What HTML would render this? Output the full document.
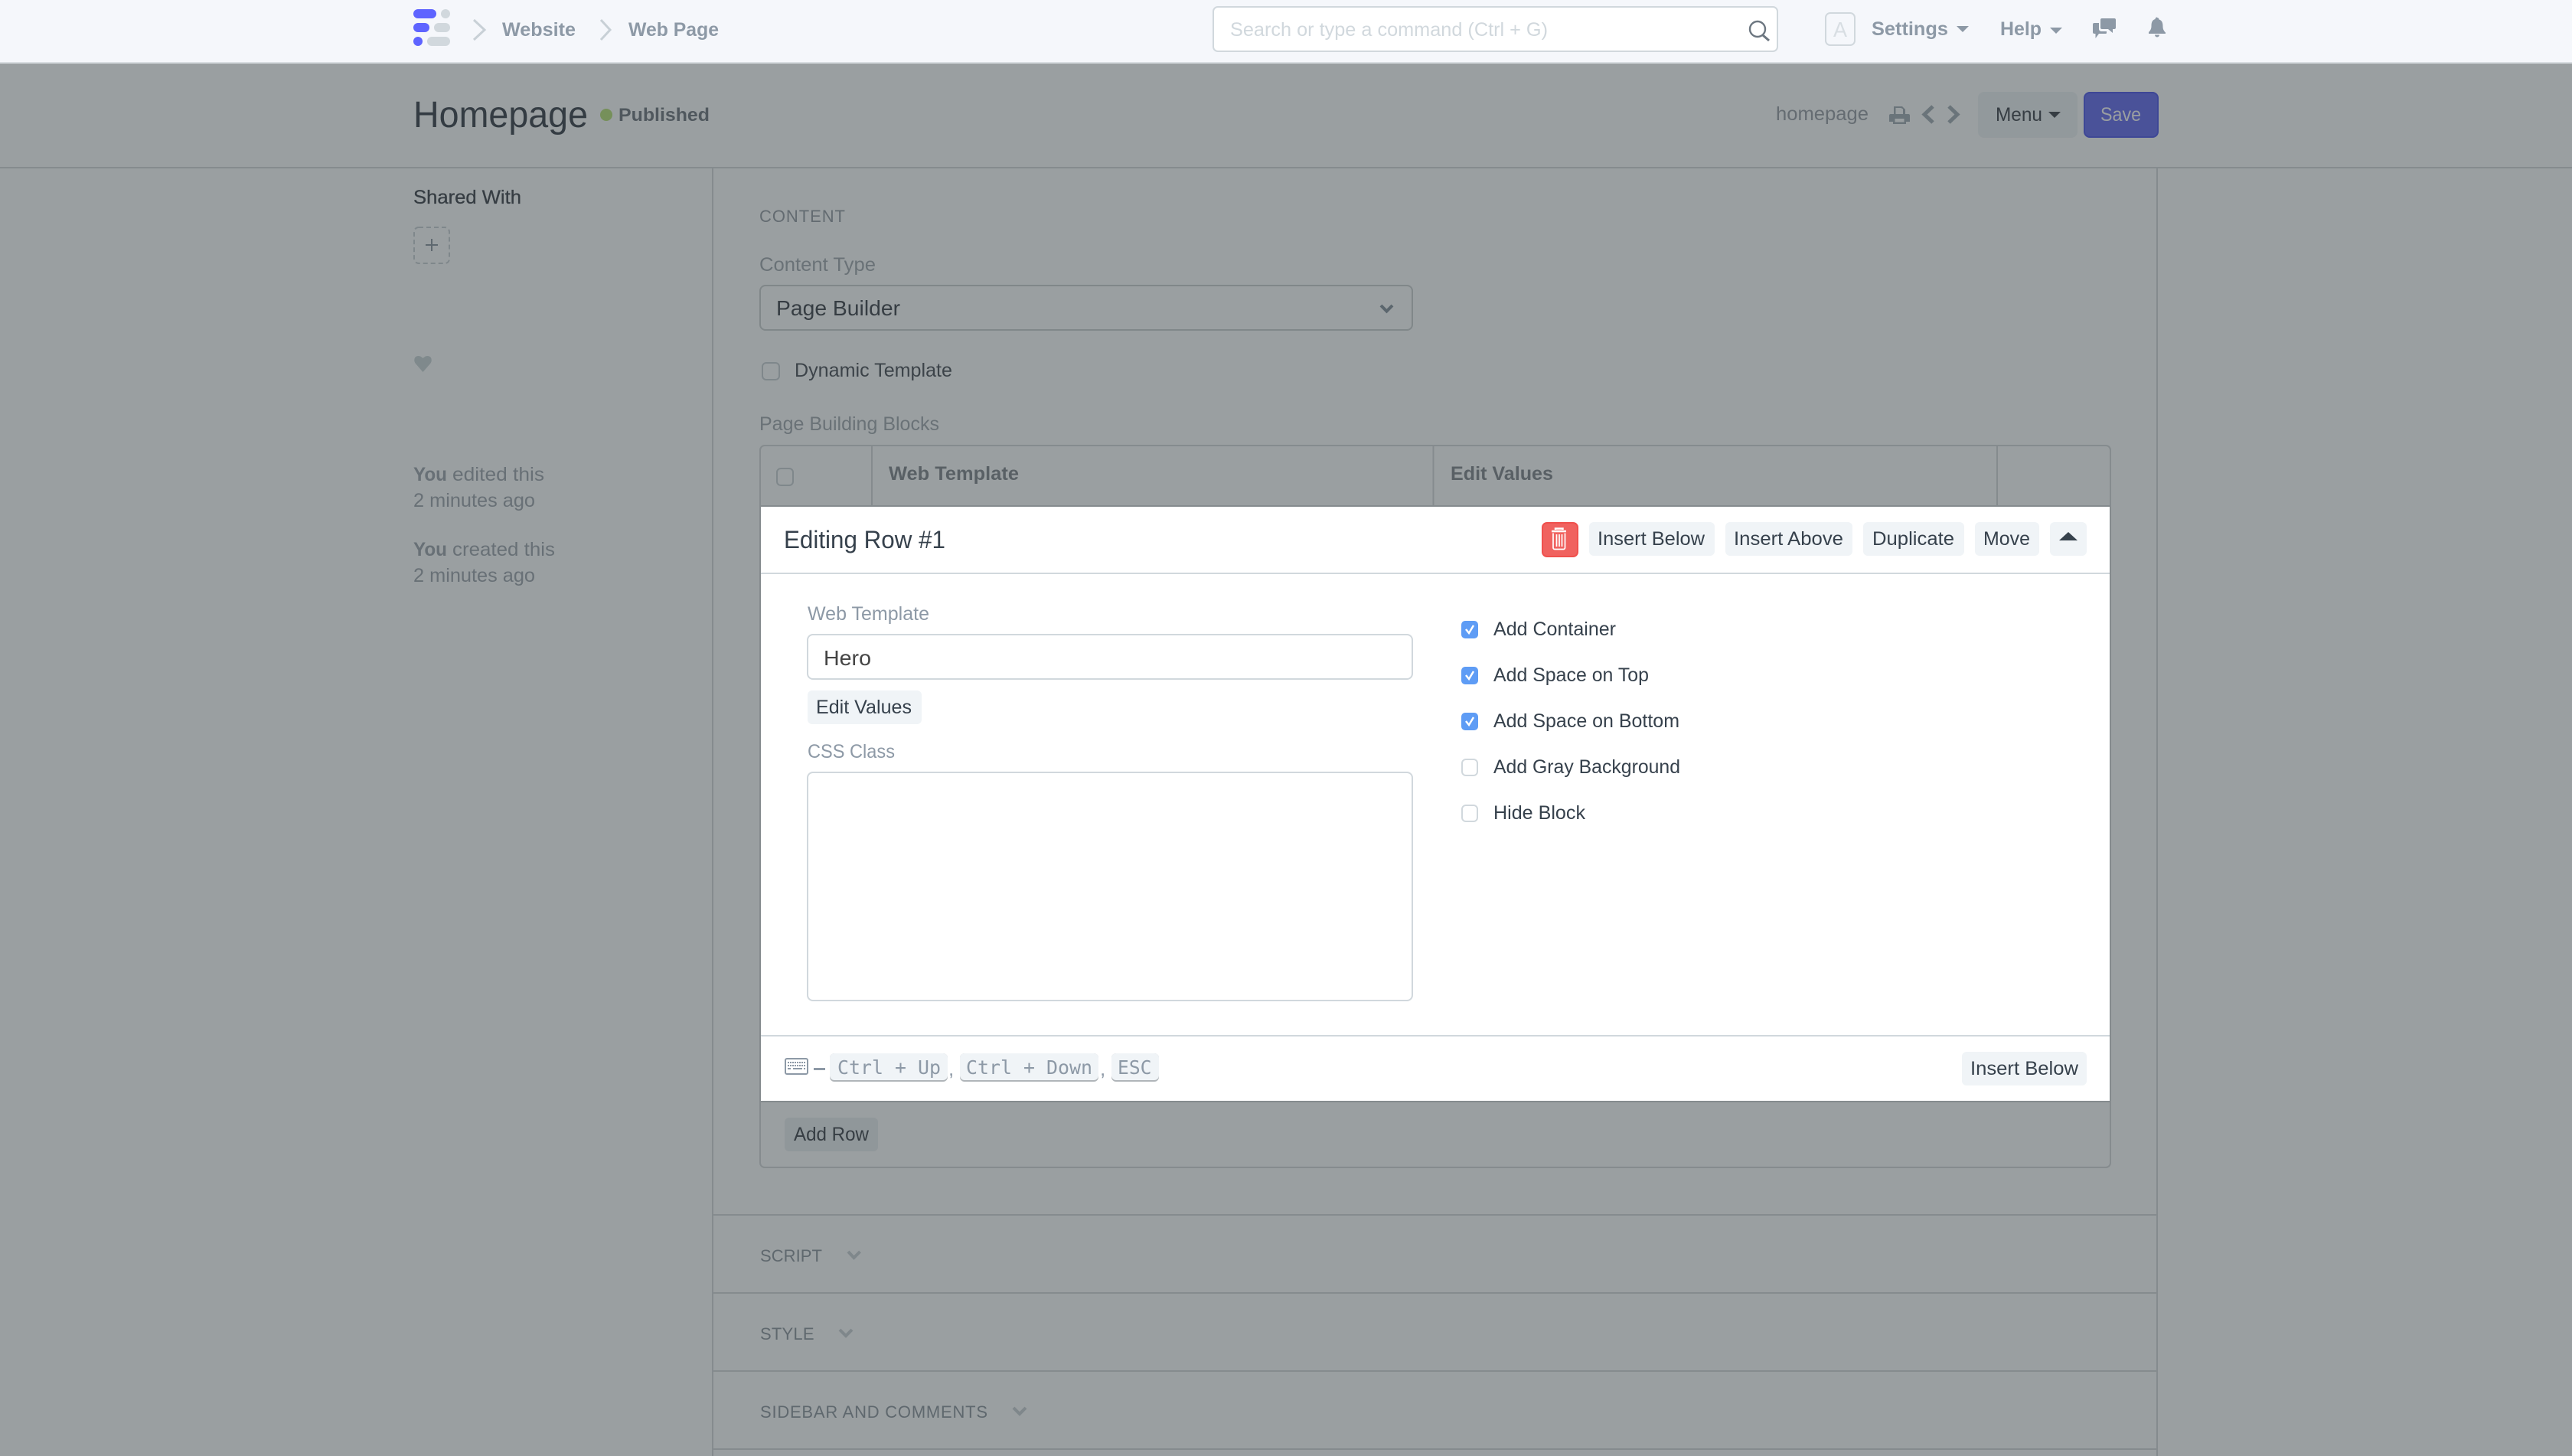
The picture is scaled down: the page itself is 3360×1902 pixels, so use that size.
<!DOCTYPE html>
<html><head><meta charset="utf-8"><title>Homepage</title>
<style>
html,body{margin:0;padding:0;width:3360px;height:1902px;overflow:hidden;background:#9a9fa1}
svg{display:block}
text{font-family:"Liberation Sans",sans-serif;white-space:pre}
.m{font-family:"DejaVu Sans Mono","Liberation Mono",monospace}
.b{font-weight:700}
</style></head><body>
<svg xmlns="http://www.w3.org/2000/svg" width="3360" height="1902" viewBox="0 0 3360 1902">
<rect width="3360" height="1902" fill="#9a9fa1"/>
<!-- navbar -->
<rect width="3360" height="81" fill="#f5f7fb"/>
<rect y="81" width="3360" height="2" fill="#d8dde1"/>
<rect x="540" y="12" width="30" height="12" rx="6" fill="#5e64ff"/><rect x="576" y="12" width="12" height="12" rx="6" fill="#d1d8dd"/>
<rect x="540" y="30" width="21" height="12" rx="6" fill="#5e64ff"/><rect x="567" y="30" width="21" height="12" rx="6" fill="#d1d8dd"/>
<rect x="540" y="48" width="12" height="12" rx="6" fill="#5e64ff"/><rect x="558" y="48" width="30" height="12" rx="6" fill="#d1d8dd"/>
<polyline points="619,26 633,39 619,52" fill="none" stroke="#c8d0d6" stroke-width="3"/>
<text x="656" y="47" font-size="25" class="b" fill="#8d99a6" textLength="96" lengthAdjust="spacingAndGlyphs">Website</text>
<polyline points="785,26 797,39 785,52" fill="none" stroke="#c8d0d6" stroke-width="3"/>
<text x="821" y="47" font-size="25" class="b" fill="#8d99a6" textLength="118" lengthAdjust="spacingAndGlyphs">Web Page</text>
<rect x="1585" y="9" width="737" height="58" rx="6" fill="#fff" stroke="#d1d8dd" stroke-width="2"/>
<text x="1607" y="47" font-size="25" fill="#d1d8dd" textLength="415" lengthAdjust="spacingAndGlyphs">Search or type a command (Ctrl + G)</text>
<circle cx="2296" cy="38" r="10" fill="none" stroke="#6c7680" stroke-width="2.400"/><line x1="2303" y1="46" x2="2311" y2="53" stroke="#6c7680" stroke-width="3"/>
<rect x="2385" y="17" width="38" height="42" rx="6" fill="none" stroke="#d1d8dd" stroke-width="2"/>
<text x="2395" y="48" font-size="28" fill="#d8dee3" textLength="18" lengthAdjust="spacingAndGlyphs">A</text>
<text x="2445" y="46" font-size="25" class="b" fill="#8d99a6" textLength="100" lengthAdjust="spacingAndGlyphs">Settings</text>
<polygon points="2556,34 2572,34 2564,42" fill="#8d99a6"/>
<text x="2613" y="46" font-size="25" class="b" fill="#8d99a6" textLength="54" lengthAdjust="spacingAndGlyphs">Help</text>
<polygon points="2678,36 2694,36 2686,44" fill="#8d99a6"/>
<path d="M2746 24h16a2 2 0 0 1 2 2v10a2 2 0 0 1-2 2h-2v5l-6-5h-8a2 2 0 0 1-2-2V26a2 2 0 0 1 2-2z" fill="#8d99a6"/>
<path d="M2736 30h6v8a3 3 0 0 0 3 3h7v2a1 1 0 0 1-1 1h-9l-4.500 6v-6h-1.500a2 2 0 0 1-2-2V32a2 2 0 0 1 2-2z" fill="#8d99a6"/>
<path d="M2818 23a2.500 2.500 0 0 1 2.500 2.500c4 1 5 4.500 5 9 0 3.500 1 5.500 3.500 8v1.500h-22V42c2.500-2.500 3.500-4.500 3.500-8 0-4.500 1-8 5-9a2.500 2.500 0 0 1 2.500-2.500zM2815 45.500h6a3 3 0 0 1-6 0z" fill="#8d99a6"/>

<!-- page header -->
<rect y="218" width="3360" height="2" fill="#858b8e"/>
<text x="540" y="166" font-size="48" fill="#343c43" textLength="228" lengthAdjust="spacingAndGlyphs">Homepage</text>
<circle cx="792" cy="150" r="8" fill="#76905a"/>
<text x="808" y="158" font-size="24" class="b" fill="#50585e" textLength="119" lengthAdjust="spacingAndGlyphs">Published</text>
<text x="2320" y="157" font-size="25" fill="#656c72" textLength="121" lengthAdjust="spacingAndGlyphs">homepage</text>
<path d="M2474 139h11l4 4v6h-3v-6.500l-2.500-1.500H2476.500v8h-2.500zM2470 149h23a2 2 0 0 1 2 2v8h-5v3h-17v-3h-5v-8a2 2 0 0 1 2-2zM2475.500 155v4.500h12V155z" fill="#6a747a" fill-rule="evenodd"/>
<polyline points="2525,139 2514,149.500 2525,160" fill="none" stroke="#6a747a" stroke-width="5"/>
<polyline points="2546,139 2557,149.500 2546,160" fill="none" stroke="#6a747a" stroke-width="5"/>
<rect x="2584" y="120" width="130" height="60" rx="8" fill="#92999c"/>
<text x="2607" y="158" font-size="25" fill="#363d43" textLength="61" lengthAdjust="spacingAndGlyphs">Menu</text>
<polygon points="2676,146 2692,146 2684,154" fill="#363d43"/>
<rect x="2723" y="121" width="96" height="58" rx="7" fill="#4a5299" stroke="#3e4796" stroke-width="2"/>
<text x="2744" y="158" font-size="25" fill="#9a9ea1" textLength="53" lengthAdjust="spacingAndGlyphs">Save</text>

<!-- frame lines -->
<rect x="930" y="220" width="2" height="1682" fill="#858b8e"/>
<rect x="2817" y="220" width="2" height="1682" fill="#858b8e"/>

<!-- sidebar -->
<text x="540" y="266" font-size="25" fill="#363d43" stroke="#363d43" stroke-width=".3" textLength="141" lengthAdjust="spacingAndGlyphs">Shared With</text>
<rect x="541" y="297" width="46" height="47" rx="6" fill="none" stroke="#7f878b" stroke-width="2" stroke-dasharray="6 4"/>
<path d="M564 312v16M556 320h16" stroke="#5e686f" stroke-width="2"/>
<path d="M552.500 486l-10-11.500a7 7 0 0 1 0-8c3-2.500 7-2 10 1.500 3-3.500 7-4 10-1.500a7 7 0 0 1 0 8z" fill="#7f898c"/>
<text x="540" y="628" font-size="25" class="b" fill="#687076" textLength="44" lengthAdjust="spacingAndGlyphs">You</text>
<text x="591" y="628" font-size="25" fill="#687076" textLength="120" lengthAdjust="spacingAndGlyphs">edited this</text>
<text x="540" y="662" font-size="25" fill="#687076" textLength="159" lengthAdjust="spacingAndGlyphs">2 minutes ago</text>
<text x="540" y="726" font-size="25" class="b" fill="#687076" textLength="44" lengthAdjust="spacingAndGlyphs">You</text>
<text x="591" y="726" font-size="25" fill="#687076" textLength="134" lengthAdjust="spacingAndGlyphs">created this</text>
<text x="540" y="760" font-size="25" fill="#687076" textLength="159" lengthAdjust="spacingAndGlyphs">2 minutes ago</text>

<!-- form -->
<text x="992" y="290" font-size="22" fill="#636b71" textLength="112" lengthAdjust="spacing">CONTENT</text>
<text x="992" y="354" font-size="25" fill="#6a7277" textLength="152" lengthAdjust="spacingAndGlyphs">Content Type</text>
<rect x="993" y="373" width="852" height="58" rx="7" fill="none" stroke="#808789" stroke-width="2"/>
<text x="1014" y="412" font-size="28" fill="#363d43" textLength="162" lengthAdjust="spacingAndGlyphs">Page Builder</text>
<polyline points="1804,399 1811.500,406.500 1819,399" fill="none" stroke="#5b666d" stroke-width="4"/>
<rect x="996" y="474" width="22" height="22" rx="5" fill="none" stroke="#7f878b" stroke-width="2"/>
<text x="1038" y="492" font-size="25" fill="#3c4349" textLength="206" lengthAdjust="spacingAndGlyphs">Dynamic Template</text>
<text x="992" y="562" font-size="25" fill="#6a7277" textLength="235" lengthAdjust="spacingAndGlyphs">Page Building Blocks</text>
<!-- table -->
<rect x="993" y="582" width="1764" height="943" rx="6" fill="none" stroke="#858b8e" stroke-width="2"/>
<path d="M1139 582v80M1872.500 582v80M2609 582v80" stroke="#858b8e" stroke-width="2"/>
<rect x="1015" y="612" width="21" height="22" rx="5" fill="none" stroke="#7f878b" stroke-width="2"/>
<text x="1161" y="627" font-size="25" class="b" fill="#596065" textLength="170" lengthAdjust="spacingAndGlyphs">Web Template</text>
<text x="1895" y="627" font-size="25" class="b" fill="#596065" textLength="134" lengthAdjust="spacingAndGlyphs">Edit Values</text>
<rect x="992" y="660" width="1766" height="2" fill="#858b8e"/>
<rect x="992" y="1438" width="1766" height="2" fill="#858b8e"/>
<rect x="1025" y="1460" width="122" height="44" rx="6" fill="#90979a"/>
<text x="1037" y="1490" font-size="25" fill="#363d43" textLength="98" lengthAdjust="spacingAndGlyphs">Add Row</text>

<!-- editing panel -->
<rect x="994" y="662" width="1762" height="776" fill="#fff"/>
<rect x="994" y="748" width="1762" height="2" fill="#d1d8dd"/>
<rect x="994" y="1352" width="1762" height="2" fill="#d1d8dd"/>
<text x="1024" y="716" font-size="32" fill="#36414c" textLength="211" lengthAdjust="spacingAndGlyphs">Editing Row #1</text>
<rect x="2015" y="683" width="46" height="44" rx="6" fill="#f0625f" stroke="#f0504d" stroke-width="2"/>
<path d="M2032 692v-1.500h9.500v1.500M2027 694h19" fill="none" stroke="#fff" stroke-width="2.500"/>
<path d="M2029 696.500v19a2 2 0 0 0 2 2h11.500a2 2 0 0 0 2-2v-19M2033.500 698v16M2037 698v16M2040.500 698v16" fill="none" stroke="#fff" stroke-width="1.700"/>
<rect x="2076" y="682" width="164" height="44" rx="6" fill="#f0f4f7"/>
<text x="2087" y="712" font-size="25" fill="#36414c" textLength="140" lengthAdjust="spacingAndGlyphs">Insert Below</text>
<rect x="2254" y="682" width="166" height="44" rx="6" fill="#f0f4f7"/>
<text x="2265" y="712" font-size="25" fill="#36414c" textLength="143" lengthAdjust="spacingAndGlyphs">Insert Above</text>
<rect x="2434" y="682" width="132" height="44" rx="6" fill="#f0f4f7"/>
<text x="2446" y="712" font-size="25" fill="#36414c" textLength="107" lengthAdjust="spacingAndGlyphs">Duplicate</text>
<rect x="2580" y="682" width="84" height="44" rx="6" fill="#f0f4f7"/>
<text x="2591" y="712" font-size="25" fill="#36414c" textLength="61" lengthAdjust="spacingAndGlyphs">Move</text>
<rect x="2678" y="682" width="48" height="44" rx="6" fill="#f0f4f7"/>
<polygon points="2702,695 2714,706 2690,706" fill="#36414c"/>

<text x="1055" y="810" font-size="25" fill="#8d99a6" textLength="159" lengthAdjust="spacingAndGlyphs">Web Template</text>
<rect x="1055" y="829" width="790" height="58" rx="7" fill="#fff" stroke="#d1d8dd" stroke-width="2"/>
<text x="1076" y="869" font-size="28" fill="#444" textLength="62" lengthAdjust="spacingAndGlyphs">Hero</text>
<rect x="1055" y="902" width="149" height="44" rx="6" fill="#f0f4f7"/>
<text x="1066" y="932" font-size="25" fill="#36414c" textLength="125" lengthAdjust="spacingAndGlyphs">Edit Values</text>
<text x="1055" y="990" font-size="25" fill="#8d99a6" textLength="114" lengthAdjust="spacingAndGlyphs">CSS Class</text>
<rect x="1055" y="1009" width="790" height="298" rx="7" fill="#fff" stroke="#d1d8dd" stroke-width="2"/>

<rect x="1909" y="811" width="22" height="23" rx="5" fill="#5e9cf5"/><polyline points="1915,822 1919,827 1925,817" fill="none" stroke="#fff" stroke-width="2.500"/>
<rect x="1909" y="871" width="22" height="23" rx="5" fill="#5e9cf5"/><polyline points="1915,882 1919,887 1925,877" fill="none" stroke="#fff" stroke-width="2.500"/>
<rect x="1909" y="931" width="22" height="23" rx="5" fill="#5e9cf5"/><polyline points="1915,942 1919,947 1925,937" fill="none" stroke="#fff" stroke-width="2.500"/>
<rect x="1910" y="992" width="20" height="21" rx="5" fill="#fff" stroke="#d1d8dd" stroke-width="2"/>
<rect x="1910" y="1052" width="20" height="21" rx="5" fill="#fff" stroke="#d1d8dd" stroke-width="2"/>
<text x="1951" y="830" font-size="25" fill="#36414c" textLength="160" lengthAdjust="spacingAndGlyphs">Add Container</text>
<text x="1951" y="890" font-size="25" fill="#36414c" textLength="203" lengthAdjust="spacingAndGlyphs">Add Space on Top</text>
<text x="1951" y="950" font-size="25" fill="#36414c" textLength="243" lengthAdjust="spacingAndGlyphs">Add Space on Bottom</text>
<text x="1951" y="1010" font-size="25" fill="#36414c" textLength="244" lengthAdjust="spacingAndGlyphs">Add Gray Background</text>
<text x="1951" y="1070" font-size="25" fill="#36414c" textLength="120" lengthAdjust="spacingAndGlyphs">Hide Block</text>

<!-- footer -->
<rect x="1026" y="1383" width="29" height="20" rx="2" fill="none" stroke="#8d99a6" stroke-width="2"/>
<path d="M1029 1388h23M1029 1392h23" stroke="#8d99a6" stroke-width="2" stroke-dasharray="2 1"/>
<path d="M1029 1396h4M1036 1396h12M1050 1396h2" stroke="#8d99a6" stroke-width="2"/>
<rect x="1063" y="1395" width="15" height="3" fill="#8d99a6"/>
<rect x="1084" y="1376" width="154" height="37" rx="6" fill="#b0b5b9"/><rect x="1084" y="1376" width="154" height="35" rx="6" fill="#f0f4f7"/>
<text x="1094" y="1403" font-size="25" class="m" fill="#8d99a6" textLength="135" lengthAdjust="spacingAndGlyphs">Ctrl + Up</text>
<text x="1239" y="1405" font-size="26" fill="#8d99a6">,</text>
<rect x="1254" y="1376" width="181" height="37" rx="6" fill="#b0b5b9"/><rect x="1254" y="1376" width="181" height="35" rx="6" fill="#f0f4f7"/>
<text x="1262" y="1403" font-size="25" class="m" fill="#8d99a6" textLength="165" lengthAdjust="spacingAndGlyphs">Ctrl + Down</text>
<text x="1437" y="1405" font-size="26" fill="#8d99a6">,</text>
<rect x="1452" y="1376" width="62" height="37" rx="6" fill="#b0b5b9"/><rect x="1452" y="1376" width="62" height="35" rx="6" fill="#f0f4f7"/>
<text x="1460" y="1403" font-size="25" class="m" fill="#8d99a6" textLength="44.500" lengthAdjust="spacingAndGlyphs">ESC</text>
<rect x="2563" y="1374" width="163" height="44" rx="6" fill="#f0f4f7"/>
<text x="2574" y="1404" font-size="25" fill="#36414c" textLength="141" lengthAdjust="spacingAndGlyphs">Insert Below</text>

<!-- sections -->
<g fill="#858b8e">
<rect x="931" y="1586" width="1887" height="2"/><rect x="931" y="1688" width="1887" height="2"/><rect x="931" y="1790" width="1887" height="2"/><rect x="931" y="1892" width="1887" height="2"/>
</g>
<text x="993" y="1648" font-size="22" fill="#5f686e" textLength="81" lengthAdjust="spacing">SCRIPT</text>
<polyline points="1108,1635 1115.500,1643 1123.500,1635" fill="none" stroke="#7f878b" stroke-width="4"/>
<text x="993" y="1750" font-size="22" fill="#5f686e" textLength="70.500" lengthAdjust="spacing">STYLE</text>
<polyline points="1097,1737 1105,1745 1113,1737" fill="none" stroke="#7f878b" stroke-width="4"/>
<text x="993" y="1852" font-size="22" fill="#5f686e" textLength="297" lengthAdjust="spacing">SIDEBAR AND COMMENTS</text>
<polyline points="1324,1839 1332,1847 1340,1839" fill="none" stroke="#7f878b" stroke-width="4"/>
</svg>
</body></html>
